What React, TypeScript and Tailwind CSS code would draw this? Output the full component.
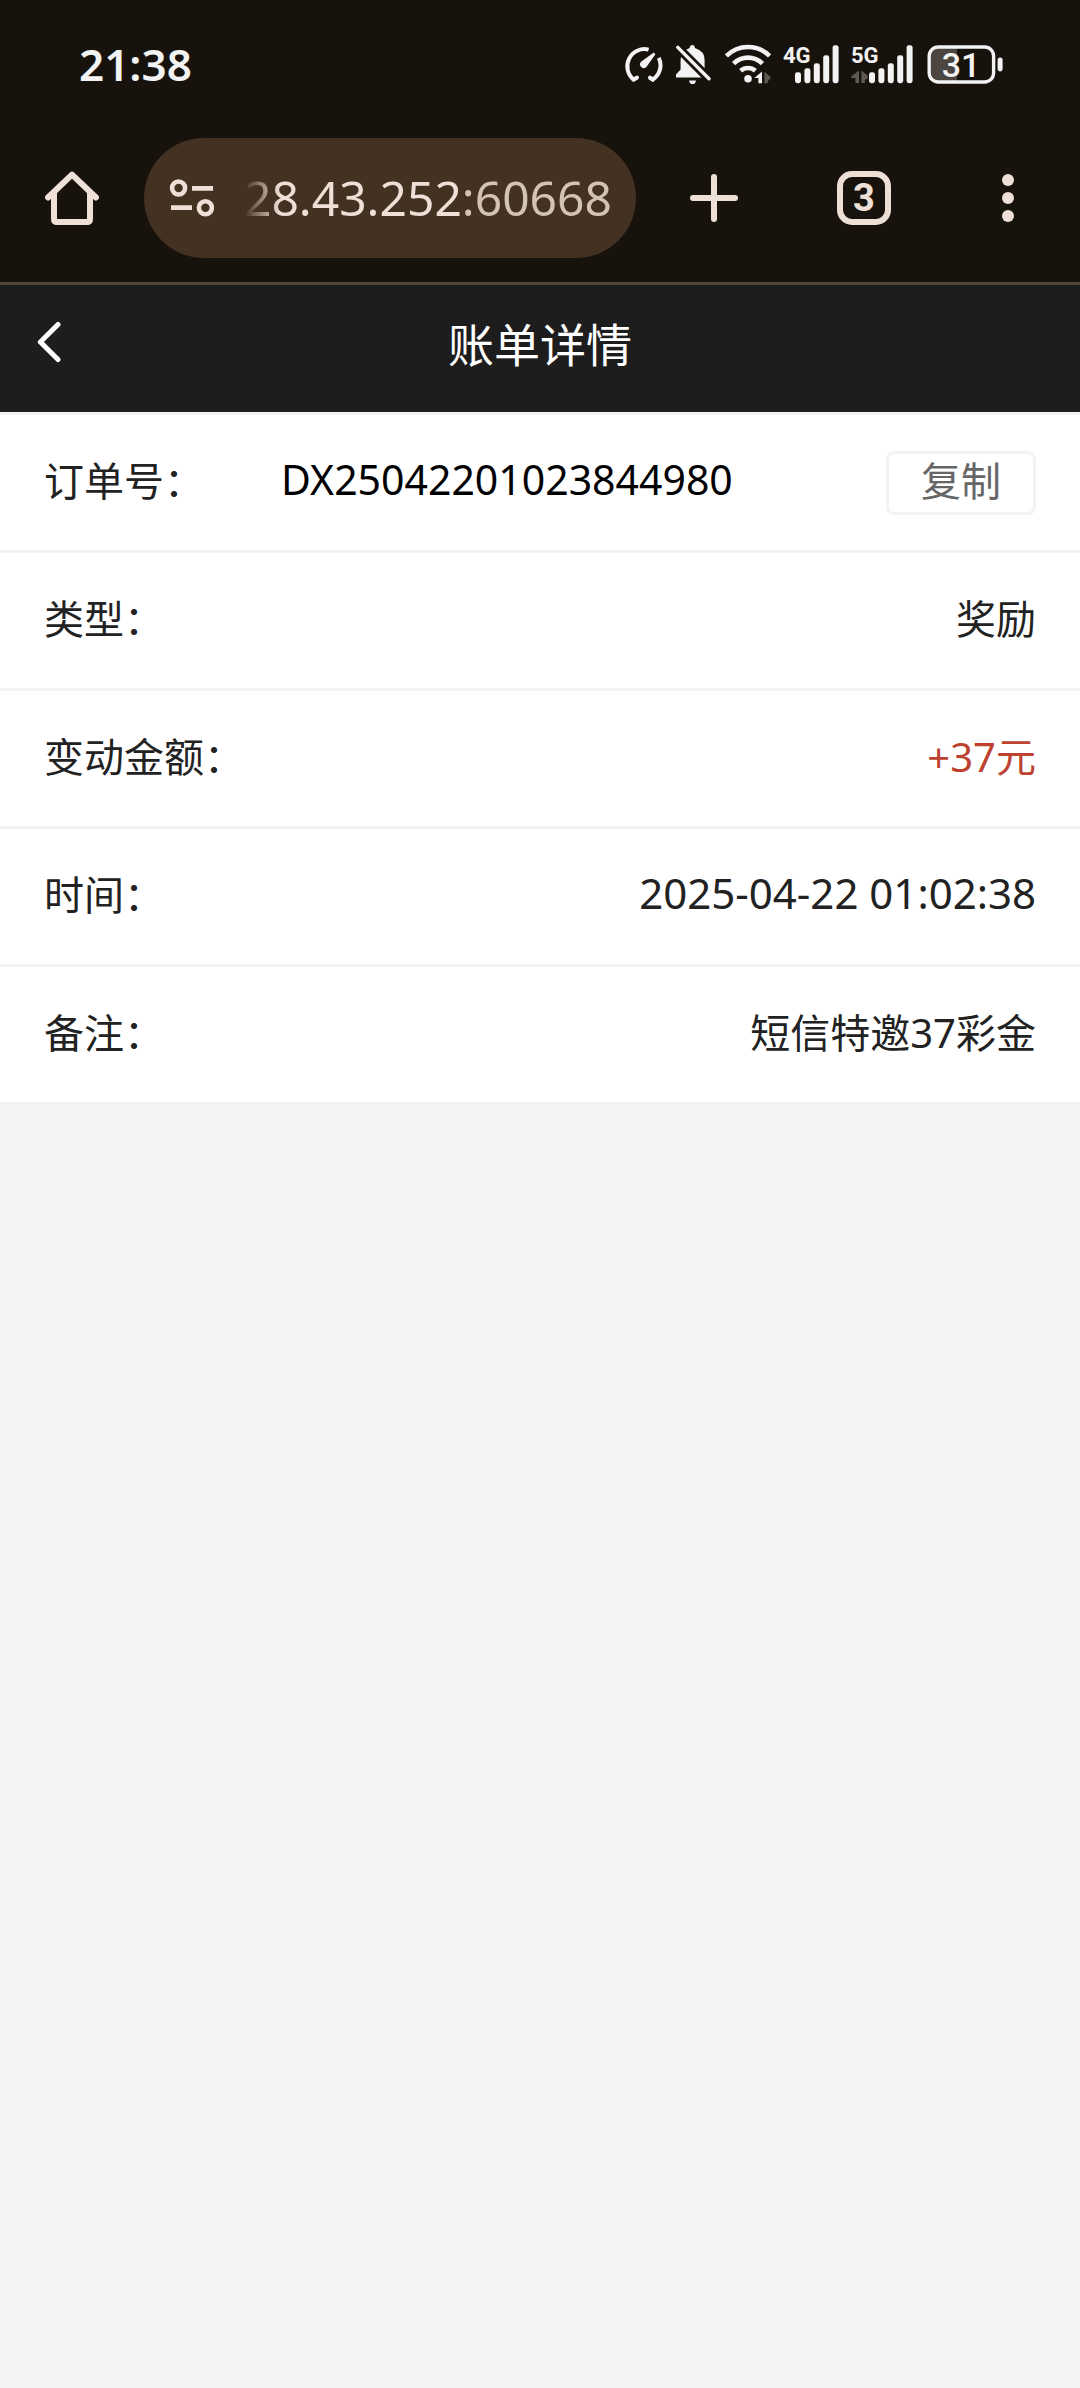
import type { ReactNode } from "react";

const LATIN = "font-['Noto_Sans','Noto_Sans_CJK_SC',sans-serif]";
const CJK = "font-['Noto_Sans_CJK_SC',sans-serif]";

function Gauge() {
  return (
    <svg width="40" height="40" viewBox="0 0 40 40" fill="none" stroke="#f3f3f3" strokeLinecap="round" strokeLinejoin="round" aria-hidden="true">
      <path d="M14 33.6 L10.6 35.6 A17.2 17.2 0 0 1 25.6 5.6" strokeWidth="4" strokeLinecap="butt" />
      <path d="M14 33.6 L10.6 35.6" strokeWidth="4" />
      <path d="M35.8 13.8 A17.2 17.2 0 0 1 29.8 35.6 L26.6 33.6" strokeWidth="4" strokeLinecap="butt" />
      <path d="M29.8 35.6 L27 33.6" strokeWidth="4" />
      <path d="M30.8 8.6 L32.4 10.2 L23.6 22.8 A3.6 3.6 0 0 1 18 17.8 Z" fill="#f3f3f3" stroke="none" />
    </svg>
  );
}

function BellOff() {
  return (
    <svg width="36" height="40" viewBox="0 0 36 40" fill="#f3f3f3" aria-hidden="true">
      <path d="M1 33.4 V30.6 L5.6 25.4 V16 Q5.6 7 14.6 4 Q15 1 17.3 1 Q19.6 1 20 4 Q29.6 7 29.6 16 V25.4 L31 27 V33.4 Z" />
      <path d="M3 3.6 L34 34.8" stroke="#17120c" strokeWidth="9" />
      <path d="M2.8 3.4 L34 34.8" stroke="#f3f3f3" strokeWidth="3.4" strokeLinecap="round" />
      <path d="M14 36.4 H21 Q20.4 40 17.5 40 Q14.6 40 14 36.4 Z" />
    </svg>
  );
}

function Wifi() {
  return (
    <svg width="48" height="40" viewBox="0 0 48 40" fill="none" stroke="#f3f3f3" strokeWidth="4.6" aria-hidden="true">
      <path d="M3.4 12 A30.5 30.5 0 0 1 46.6 12" />
      <path d="M10.6 19.6 A20.4 20.4 0 0 1 39.4 19.6" />
      <path d="M17.6 26.8 A11 11 0 0 1 32.4 26.8" />
      <circle cx="25" cy="34.8" r="3.8" fill="#f3f3f3" stroke="none" />
      <path d="M39 27.4 V39.2 H35.4 V34 H31.4 Z" fill="#f3f3f3" stroke="none" />
      <path d="M41.4 27.4 L48 33.4 L45 37 L44.6 39.2 H41.4 Z" fill="#5d5851" stroke="none" />
    </svg>
  );
}

function Signal({ label, data }: { label: string; data?: boolean }) {
  const heights = [11, 15, 20, 28, 38];
  const start = data ? 18 : 12;
  return (
    <div className="relative">
      <svg width={start + 44} height="40" viewBox={`0 0 ${start + 44} 40`} aria-hidden="true">
        {heights.map((h, i) => (
          <rect key={h} x={start + i * 9.4} y={39.2 - h} width="6" height={h} rx="2.4" fill="#f3f3f3" />
        ))}
        {data && (
          <g fill="#5d5851">
            <path d="M8 26.6 V39 H4.4 V34 H0 V32.6 Z" />
            <path d="M10.4 26.6 L16.6 31.6 V34.4 L13.8 36 V39 H10.4 Z" />
          </g>
        )}
      </svg>
      <span className="absolute left-0 top-0 font-['Roboto',sans-serif] text-[22px] font-bold leading-[24px] text-[#f3f3f3]">{label}</span>
    </div>
  );
}

function Battery() {
  return (
    <div className="relative">
      <svg width="78" height="40" viewBox="0 0 78 40" aria-hidden="true">
        <path d="M32 4 H14 Q6 4 6 12 V29 Q6 37 14 37 H32 Z" fill="#4c4540" />
        <rect x="4.2" y="3" width="64.4" height="35" rx="9" fill="none" stroke="#f3f3f3" strokeWidth="3.4" />
        <rect x="72.6" y="13.4" width="5" height="14" rx="2.4" fill="#f3f3f3" />
      </svg>
      <span className="absolute left-0 top-0 w-[72px] text-center font-['Roboto',sans-serif] text-[34px] font-medium leading-[42px] text-[#f3f3f3]">31</span>
    </div>
  );
}

function StatusBar() {
  return (
    <div className="flex h-[114px] items-center justify-between pl-[79px] pr-[77px] pt-[14px]">
      <span className={`${LATIN} text-[44px] font-semibold leading-[60px] text-[#f3f3f3]`}>21:38</span>
      <div className="flex items-center gap-3">
        <Gauge />
        <BellOff />
        <Wifi />
        <Signal label="4G" />
        <Signal label="5G" data />
        <Battery />
      </div>
    </div>
  );
}

function Toolbar() {
  return (
    <div className="flex h-[171px] items-center border-b-[3px] border-[#4f453b] text-[#eee0d6]">
      <button type="button" aria-label="主页" className="flex h-[120px] w-[144px] shrink-0 items-center justify-center">
        <svg width="54" height="54" viewBox="0 0 54 54" fill="none" stroke="currentColor" strokeWidth="6" aria-hidden="true">
          <path d="M9 20 V48 Q9 51 12 51 H42 Q45 51 45 48 V20" />
          <path d="M3 26.5 L27 3.6 L51 26.5" strokeLinecap="round" strokeLinejoin="round" />
        </svg>
      </button>
      <button type="button" aria-label="地址栏 28.43.252:60668" className="flex h-[120px] min-w-0 flex-1 items-center justify-between rounded-full bg-[#433122] pl-6 pr-6">
        <svg width="46" height="40" viewBox="0 0 46 40" fill="none" stroke="currentColor" strokeWidth="4.6" aria-hidden="true">
          <circle cx="10.6" cy="10" r="6.5" />
          <path d="M24 10.4 H45 M3 29.6 H24" />
          <circle cx="37.4" cy="29.8" r="6.5" />
        </svg>
        <span className={`${LATIN} whitespace-nowrap text-[48px] leading-[64px] [mask-image:linear-gradient(to_right,transparent,black_36px)]`}>
          28.43.252<span className="text-[#d3c3b5]">:60668</span>
        </span>
      </button>
      <button type="button" aria-label="新标签页" className="flex h-[120px] w-[156px] shrink-0 items-center justify-center">
        <svg width="48" height="48" viewBox="0 0 48 48" stroke="currentColor" strokeWidth="6" strokeLinecap="round" aria-hidden="true">
          <path d="M24 3 V45 M3 24 H45" />
        </svg>
      </button>
      <button type="button" aria-label="3 个标签页" className="flex h-[120px] w-[144px] shrink-0 items-center justify-center">
        <span className="flex size-[54px] items-center justify-center rounded-[15px] border-[6px] border-current font-['Roboto',sans-serif] text-[38px] font-bold leading-[42px]">3</span>
      </button>
      <button type="button" aria-label="更多选项" className="flex h-[120px] w-[144px] shrink-0 items-center justify-center">
        <svg width="12" height="48" viewBox="0 0 12 48" fill="currentColor" aria-hidden="true">
          <circle cx="6" cy="6" r="6" />
          <circle cx="6" cy="24" r="6" />
          <circle cx="6" cy="42" r="6" />
        </svg>
      </button>
    </div>
  );
}

function PageHeader() {
  return (
    <header className="grid h-[127px] grid-cols-[1fr_auto_1fr] items-center bg-[#1d1d1d] pb-[14px] text-white">
      <button type="button" aria-label="返回" className="flex h-[100px] w-[98px] items-center justify-center">
        <svg width="24" height="42" viewBox="0 0 24 42" fill="none" stroke="currentColor" strokeWidth="5" strokeLinecap="round" strokeLinejoin="round" aria-hidden="true">
          <path d="M21 3.4 L3.4 21 L21 38.6" />
        </svg>
      </button>
      <h1 className={`${CJK} text-[46px] leading-[60px]`}>账单详情</h1>
    </header>
  );
}

function Row({ label, children }: { label: string; children: ReactNode }) {
  return (
    <div className="flex h-[138px] items-center justify-between border-t-[3px] border-[#f3f3f3] bg-white px-[44px] text-[#222222]">
      <dt className={`${CJK} pb-2 text-[40px] leading-[56px]`}>{label}</dt>
      {children}
    </div>
  );
}

export default function App() {
  return (
    <div className="min-h-screen bg-[#f3f3f3]">
      <div className="bg-[#17120c]">
        <StatusBar />
        <Toolbar />
      </div>
      <PageHeader />
      <dl>
        <Row label="订单号：">
          <dd className="flex flex-1 items-center justify-between pl-[77px]">
            <span className={`${LATIN} pb-2 text-[41px] leading-[56px] text-black`}>DX25042201023844980</span>
            <button type="button" className={`${CJK} flex h-16 w-[150px] items-center justify-center rounded-lg border-[3px] border-[#f3f3f3] pb-2 text-[40px] leading-[56px] text-[#666666]`}>
              复制
            </button>
          </dd>
        </Row>
        <Row label="类型：">
          <dd className={`${CJK} pb-2 text-[40px] leading-[56px]`}>奖励</dd>
        </Row>
        <Row label="变动金额：">
          <dd className={`${LATIN} pb-1 text-[40px] leading-[56px] text-[#bd4230]`}>+37元</dd>
        </Row>
        <Row label="时间：">
          <dd className={`${LATIN} pb-2 text-[42px] leading-[56px]`}>2025-04-22 01:02:38</dd>
        </Row>
        <Row label="备注：">
          <dd className={`${LATIN} pb-1 text-[40px] leading-[56px]`}>短信特邀37彩金</dd>
        </Row>
      </dl>
    </div>
  );
}
